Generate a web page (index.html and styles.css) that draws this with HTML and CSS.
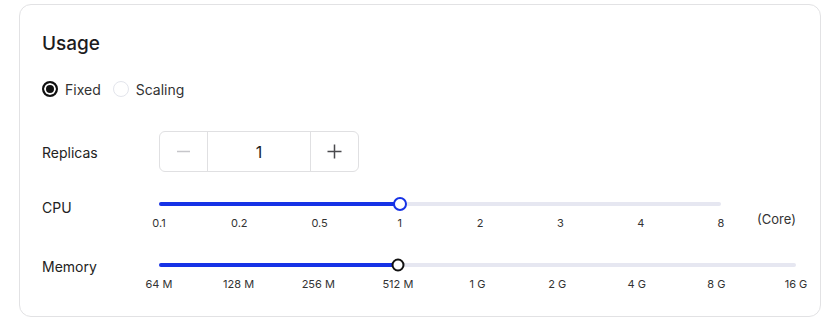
FILE: index.html
```html
<!DOCTYPE html>
<html lang="en">
<head>
  <meta charset="UTF-8">
  <title>Usage</title>
  <link rel="stylesheet" href="styles.css">
</head>
<body>
  <div class="card">
    <h2 class="title">Usage</h2>

    <div class="radios">
      <label class="radio checked"><span class="dot"></span>Fixed</label>
      <label class="radio"><span class="dot"></span>Scaling</label>
    </div>

    <div class="row replicas">
      <div class="label">Replicas</div>
      <div class="stepper">
        <button class="step minus" aria-label="Decrease">
          <svg width="15" height="15" viewBox="0 0 15 15"><path d="M1 7.5h13" stroke="currentColor" stroke-width="1.5"/></svg>
        </button>
        <div class="value">1</div>
        <button class="step plus" aria-label="Increase">
          <svg width="15" height="15" viewBox="0 0 15 15"><path d="M0.5 7.5h14M7.5 0.5v14" stroke="currentColor" stroke-width="1.5"/></svg>
        </button>
      </div>
    </div>

    <div class="row slider-row cpu">
      <div class="label">CPU</div>
      <div class="slider">
        <div class="track">
          <div class="fill" style="width: 42.857%"></div>
          <span class="thumb blue" style="left: 42.857%"></span>
        </div>
        <div class="ticks">
          <span>0.1</span><span>0.2</span><span>0.5</span><span>1</span>
          <span>2</span><span>3</span><span>4</span><span>8</span>
        </div>
      </div>
      <div class="unit">(Core)</div>
    </div>

    <div class="row slider-row memory">
      <div class="label">Memory</div>
      <div class="slider">
        <div class="track">
          <div class="fill" style="width: 37.5%"></div>
          <span class="thumb dark" style="left: 37.5%"></span>
        </div>
        <div class="ticks">
          <span>64 M</span><span>128 M</span><span>256 M</span><span>512 M</span>
          <span>1 G</span><span>2 G</span><span>4 G</span><span>8 G</span><span>16 G</span>
        </div>
      </div>
    </div>
  </div>
</body>
</html>
```

FILE: styles.css
```css
body {
  margin: 0;
  padding: 0;
  background: #fff;
  color: #1c1c1e;
  font-family: Inter, "Noto Sans", sans-serif;
}
.card {
  box-sizing: border-box;
  margin: 4px 12px 0 19px;
  height: 313px;
  padding: 27px 22px 0 22px;
  border: 1px solid #e2e2e4;
  border-radius: 12px;
}
.title {
  margin: 0;
  font-size: 19px;
  font-weight: 500;
  line-height: 24px;
}
.radios {
  display: flex;
  gap: 12px;
  margin-top: 23px;
  height: 20px;
  align-items: center;
}
.radio {
  display: flex;
  align-items: center;
  gap: 7px;
  font-size: 14px;
  color: #333;
}
.dot {
  box-sizing: border-box;
  width: 16px;
  height: 16px;
  border-radius: 50%;
  border: 1px solid #e3e5ec;
  background: #fff;
}
.radio.checked .dot {
  border: 2px solid #111;
  box-shadow: inset 0 0 0 2px #fff;
  background: #111;
}
.row {
  display: flex;
}
.label {
  width: 117px;
  flex: none;
  font-size: 14px;
  line-height: 16px;
  color: #222;
}
.replicas {
  margin-top: 32px;
  align-items: center;
}
.replicas .label {
  margin-top: 2px;
}
.stepper {
  display: flex;
  width: 200px;
  height: 41px;
  box-sizing: border-box;
  border: 1px solid #e0e0e2;
  border-radius: 6px;
}
.step {
  width: 47px;
  border: none;
  background: none;
  padding: 0;
  display: flex;
  align-items: center;
  justify-content: center;
  color: #4a4a4e;
}
.step svg {
  display: block;
}
.step.minus {
  color: #c6c6ca;
}
.value {
  flex: 1;
  display: flex;
  align-items: center;
  justify-content: center;
  border-left: 1px solid #e0e0e2;
  border-right: 1px solid #e0e0e2;
  font-size: 16px;
}
.slider-row {
  align-items: flex-start;
}
.cpu {
  margin-top: 25px;
}
.cpu .label {
  margin-top: 3px;
}
.cpu .slider {
  width: 562px;
}
.memory {
  margin-top: 28px;
}
.memory .label {
  margin-top: 1px;
}
.memory .slider {
  width: 637px;
}
.track {
  position: relative;
  height: 4px;
  margin: 5px 0;
  border-radius: 2px;
  background: #e6e7f1;
}
.fill {
  height: 100%;
  border-radius: 2px;
  background: #1632e6;
}
.thumb {
  position: absolute;
  top: 50%;
  width: 14px;
  height: 14px;
  box-sizing: border-box;
  border-radius: 50%;
  background: #fff;
  transform: translate(-50%, -50%);
}
.thumb.blue {
  border: 2px solid #1632e6;
}
.thumb.dark {
  width: 13px;
  height: 13px;
  border: 2px solid #111;
}
.ticks {
  display: flex;
  justify-content: space-between;
  margin-top: 10px;
  height: 14px;
}
.ticks span {
  width: 0;
  display: flex;
  justify-content: center;
  white-space: nowrap;
  font-size: 11px;
  line-height: 14px;
  color: #333;
}
.unit {
  margin: 12px 0 0 36px;
  font-size: 13px;
  line-height: 20px;
  color: #333;
}
```
